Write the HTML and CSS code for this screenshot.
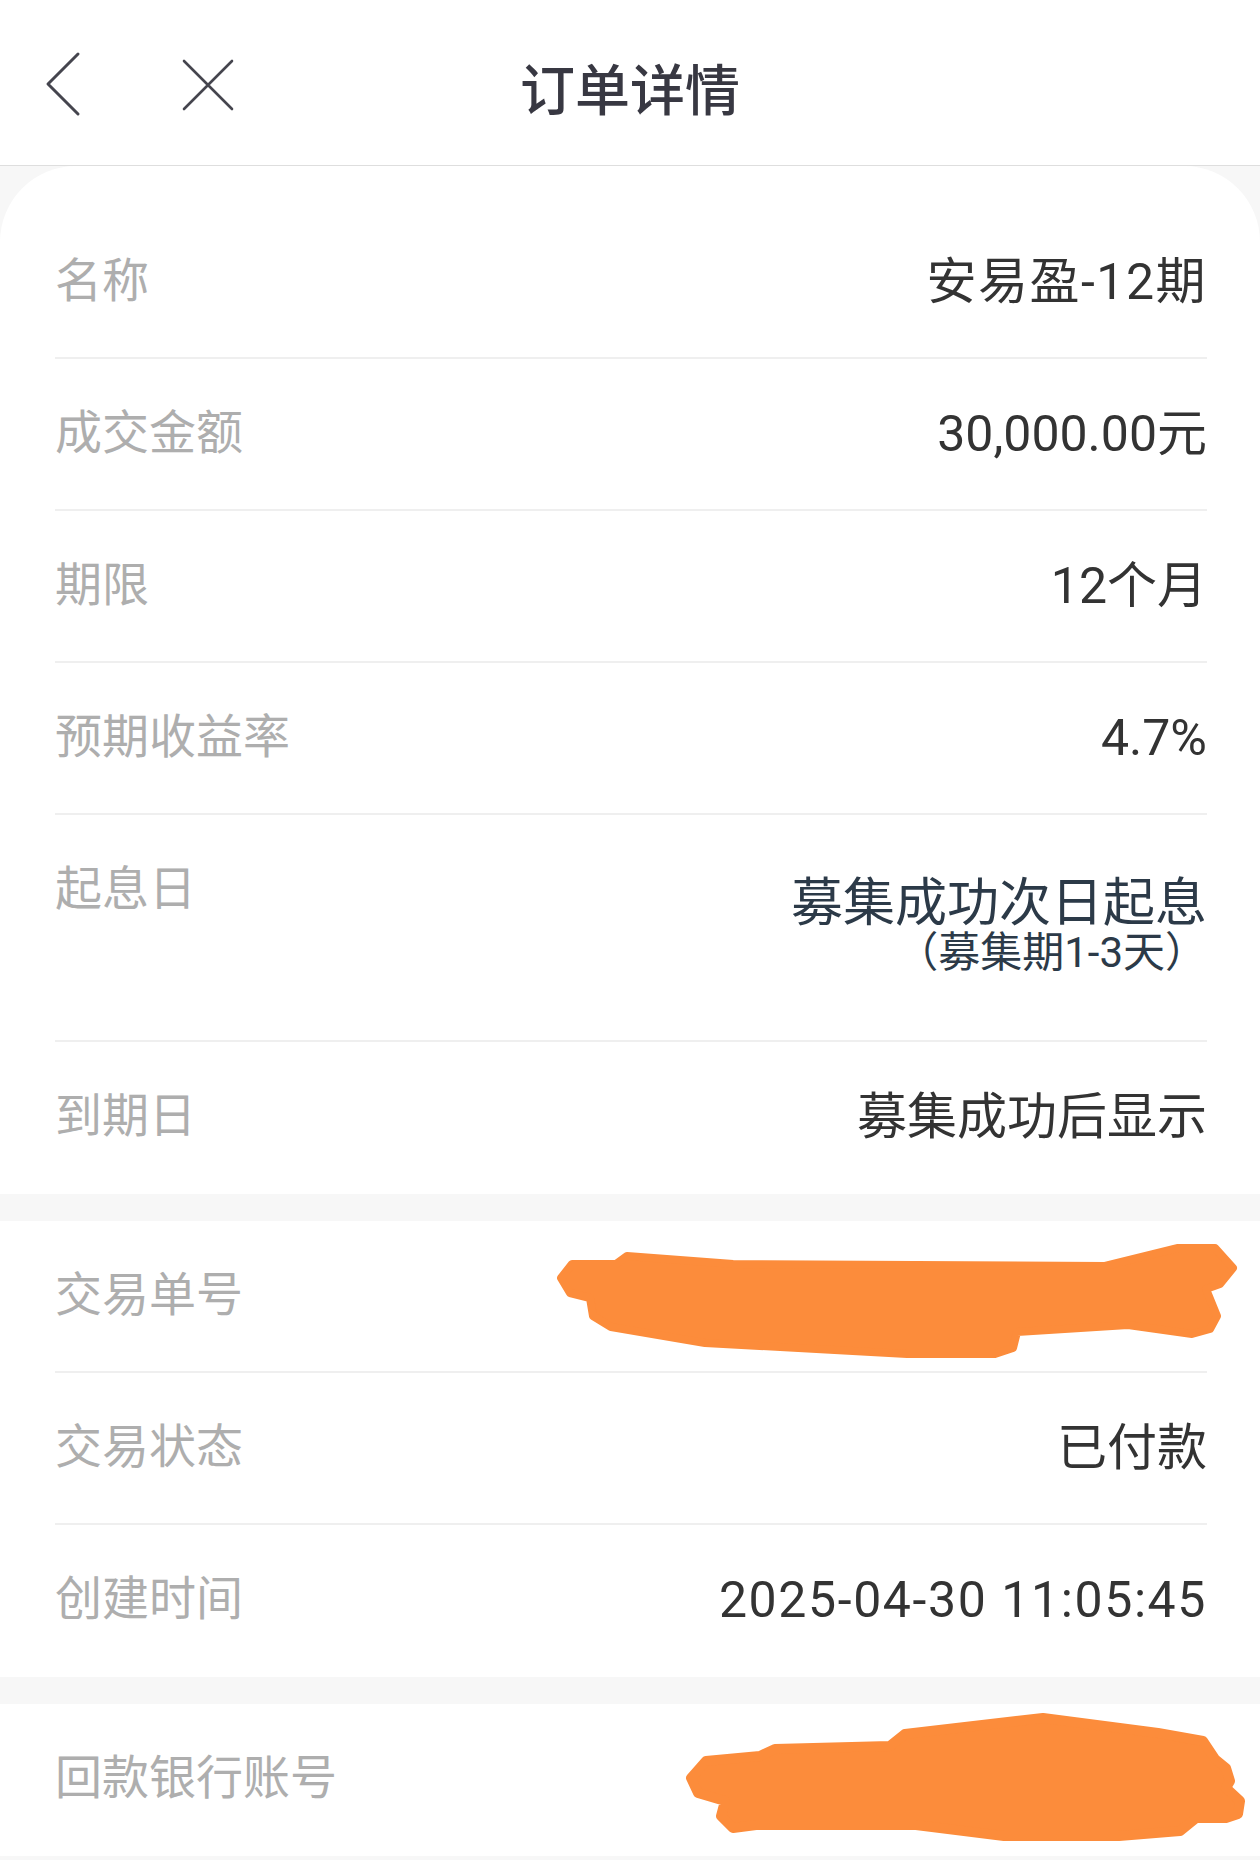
FILE: index.html
```html
<!DOCTYPE html>
<html lang="zh-CN">
<head>
    <meta charset="UTF-8">
    <meta name="viewport" content="width=device-width, initial-scale=1.0">
    <title>订单详情</title>
    <link rel="stylesheet" href="styles.css">
</head>
<body>
    <div class="header">
        <div class="nav-btns">
            <svg class="icon-back" width="40" height="70" viewBox="0 0 40 70">
                <polyline points="35,5 5,35 35,65" fill="none" stroke="#45454e" stroke-width="3" stroke-linecap="round" stroke-linejoin="round"/>
            </svg>
            <svg class="icon-close" width="56" height="56" viewBox="0 0 56 56">
                <path d="M4 4 L52 52 M52 4 L4 52" fill="none" stroke="#45454e" stroke-width="2.6" stroke-linecap="round"/>
            </svg>
        </div>
        <h1 class="title">订单详情</h1>
        <div></div>
    </div>

    <div class="content">
        <div class="section first">
            <div class="row">
                <span class="label">名称</span>
                <span class="value spaced">安易盈-12期</span>
            </div>
            <div class="row">
                <span class="label">成交金额</span>
                <span class="value">30,000.00元</span>
            </div>
            <div class="row">
                <span class="label">期限</span>
                <span class="value">12个月</span>
            </div>
            <div class="row">
                <span class="label">预期收益率</span>
                <span class="value">4.7%</span>
            </div>
            <div class="row tall">
                <span class="label">起息日</span>
                <div class="value-block">
                    <div class="value-main">募集成功次日起息</div>
                    <div class="value-sub">（募集期1-3天）</div>
                </div>
            </div>
            <div class="row">
                <span class="label">到期日</span>
                <span class="value">募集成功后显示</span>
            </div>
        </div>

        <div class="section">
            <div class="row">
                <span class="label">交易单号</span>
                <span class="value">&nbsp;</span>
                <!-- 打码 -->
                <svg class="redact redact-1" width="700" height="120" viewBox="0 0 700 120">
                    <path d="M11 37 L22 23 L66 23 L77 15 L183 23 L555 25 L628 7 L665 7 L683 27 L670 43 L656 48 L667 75 L660 88 L642 93 L578 84 L467 91 L463 107 L445 113 L357 113 L155 102 L61 86 L43 75 L40 57 L20 52 Z" fill="#fc8c3b" stroke="#fc8c3b" stroke-width="8" stroke-linejoin="round"/>
                </svg>
            </div>
            <div class="row">
                <span class="label">交易状态</span>
                <span class="value">已付款</span>
            </div>
            <div class="row">
                <span class="label">创建时间</span>
                <span class="value date">2025-04-30 11:05:45</span>
            </div>
        </div>

        <div class="section">
            <div class="row">
                <span class="label">回款银行账号</span>
                <span class="value">&nbsp;</span>
                <svg class="redact redact-2" width="570" height="135" viewBox="0 0 570 135">
                    <path d="M11 67 L26 50 L80 45 L95 38 L210 35 L225 23 L363 7 L478 22 L523 30 L535 48 L546 57 L550 70 L546 77 L560 90 L558 103 L546 107 L516 107 L500 120 L439 125 L324 125 L236 114 L76 114 L53 117 L41 105 L45 90 L18 82 Z" fill="#fc8c3b" stroke="#fc8c3b" stroke-width="10" stroke-linejoin="round"/>
                </svg>
            </div>
        </div>
    </div>
</body>
</html>
```

FILE: styles.css
```css
body {
    font-family: "Noto Sans CJK SC", "Noto Sans", sans-serif;
    background-color: #f7f7f7;
    margin: 0;
    padding: 0;
    width: 1260px;
    min-height: 1860px;
}
.header {
    height: 165px;
    background-color: #fff;
    border-bottom: 1px solid #dedede;
    display: grid;
    grid-template-columns: 1fr auto 1fr;
    align-items: center;
}
.nav-btns {
    display: flex;
    align-items: center;
    gap: 97px;
    padding-left: 43px;
    padding-top: 2px;
}
.icon-close {
    margin-top: 2px;
}
.title {
    margin: 0;
    font-size: 55px;
    font-weight: 500;
    color: #383842;
    line-height: 1;
    padding-top: 8px;
}
.section {
    background-color: #fff;
    padding: 0 53px 0 55px;
    margin-bottom: 27px;
}
.section.first {
    padding-top: 41px;
    border-radius: 76px 76px 0 0;
}
.section:last-child {
    margin-bottom: 5px;
}
.row {
    position: relative;
    display: flex;
    justify-content: space-between;
    align-items: flex-start;
    padding: 40px 0 50px;
    line-height: 60px;
    border-bottom: 2px solid #efefef;
}
.section .row:last-child {
    border-bottom: none;
    padding-bottom: 52px;
}
.label {
    font-size: 47px;
    color: #aeaeae;
}
.value {
    font-family: Roboto, "Noto Sans CJK SC", sans-serif;
    font-size: 50px;
    line-height: 50px;
    margin-top: 10px;
    color: #333;
}
.value.spaced {
    letter-spacing: 1.5px;
}
.value.date {
    letter-spacing: 1.6px;
}
.value-block {
    text-align: right;
    color: #2c3a48;
    margin-top: 16px;
    margin-bottom: 15px;
}
.value-main {
    font-size: 52px;
    line-height: 56px;
}
.value-sub {
    font-family: Roboto, "Noto Sans CJK SC", sans-serif;
    font-size: 42px;
    line-height: 44px;
    margin-top: 4px;
}
.redact {
    position: absolute;
    top: 20px;
}
.redact-1 {
    left: 495px;
}
.redact-2 {
    left: 625px;
    top: 7px;
}
```
